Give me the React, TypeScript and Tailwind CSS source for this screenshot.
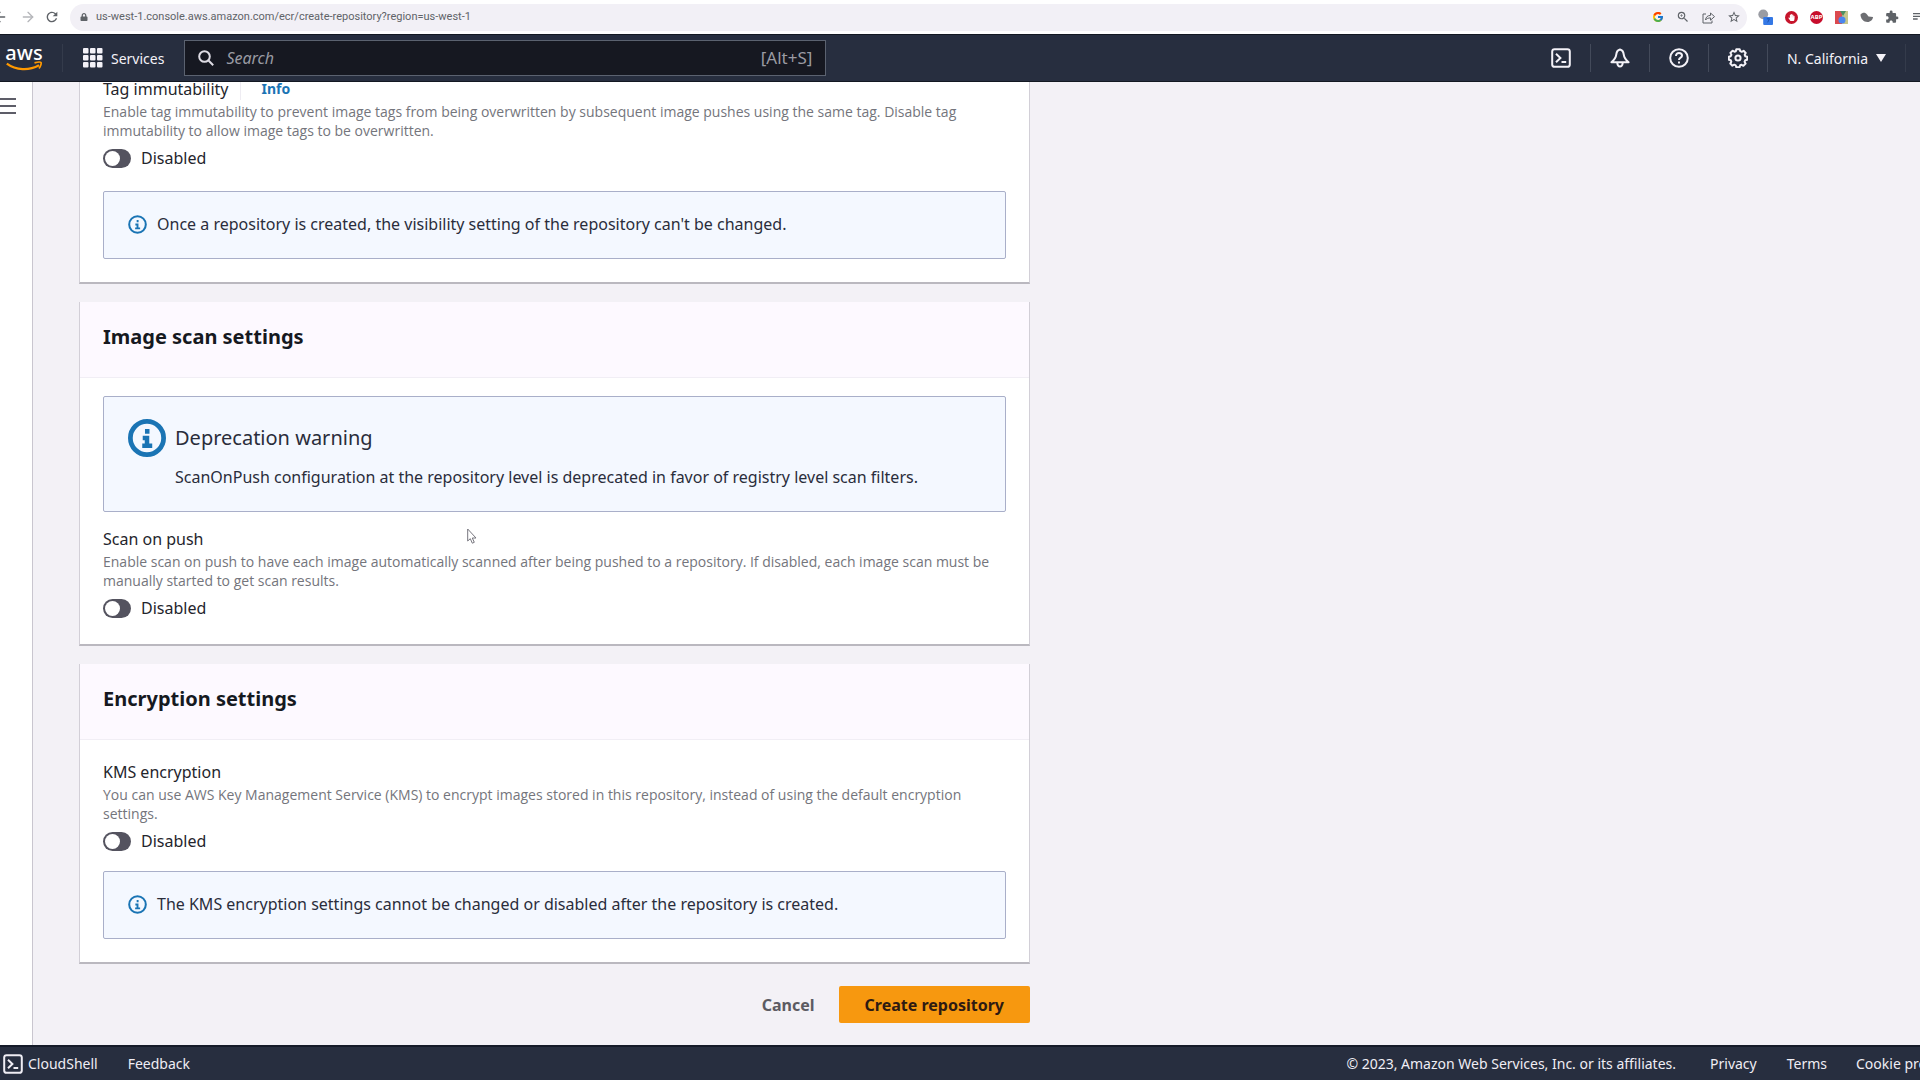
import React, { useState } from "react";
import { FaHandPaper, FaLock } from "react-icons/fa";
import { FcGoogle } from "react-icons/fc";
import { MdExtension, MdOutlineZoomIn, MdPlaylistPlay, MdRefresh, MdStarBorder } from "react-icons/md";
import { ArrowLeft, ArrowRight } from "lucide-react";

const InfoIcon: React.FC<{ large?: boolean }> = ({ large }) => (
  <svg viewBox="0 0 16 16" className={large ? "h-[38px] w-[38px] shrink-0" : "h-[19px] w-[19px] shrink-0"} fill="none" stroke="#1a74b4">
    <circle cx="8" cy="8" r="7" strokeWidth={large ? 2 : 1.7} />
    <path d="M8 11V8H6.2M6 11.3h4.2M8.1 4.2v2" strokeWidth={large ? 1.9 : 1.6} />
  </svg>
);

const ShellIcon = () => (
  <svg viewBox="0 0 20 20" className="h-5 w-5" fill="none" stroke="currentColor" strokeWidth="2">
    <rect x="1.2" y="1.2" width="17.6" height="17.6" rx="2.4" />
    <path d="M5 5.8l4.4 4.2L5 14.2M10.5 14h4.7" />
  </svg>
);

const BellIcon = () => (
  <svg viewBox="0 0 20 20" className="h-5 w-5" fill="none" stroke="currentColor" strokeWidth="2" strokeLinejoin="round">
    <path d="M10 1.5C7.8 2 6.6 3.8 6.3 6.300 5.900 9.500 4.300 11.800 1.400 14.200h17.200c-2.900-2.400-4.500-4.700-4.900-7.900C13.400 3.800 12.200 2 10 1.500z" />
    <path d="M7.300 15c.2 2.200 1.200 3.500 2.700 3.500s2.500-1.300 2.700-3.500" />
  </svg>
);

const HelpIcon = () => (
  <svg viewBox="0 0 20 20" className="h-5 w-5" fill="none" stroke="currentColor" strokeWidth="2">
    <circle cx="10" cy="10" r="8.800" />
    <path d="M7 8c0-1.900 1.300-2.900 3-2.900s3 1 3 2.600c0 2-3 2-3 4.300M10 13.500v2" />
  </svg>
);

const GearIcon = () => (
  <svg viewBox="0 0 20 20" className="h-5 w-5" fill="none" stroke="currentColor" strokeWidth="2" strokeLinejoin="round">
    <path d="M8.300 1.200h3.400l.6 2 1.400.6 1.900-1 2.100 2.200-1 1.800.5 1.400 2 .6v2.900l-2 .6-.6 1.400 1 1.900-2.200 2.200-1.800-1-1.400.5-.6 2H8.300l-.6-2-1.400-.6-1.900 1-2.100-2.200 1-1.800-.5-1.400-2-.6V8.800l2-.6.6-1.400-1-1.900 2.200-2.200 1.800 1 1.400-.5z" />
    <circle cx="10" cy="10" r="2.600" />
  </svg>
);

const ShareIcon = () => (
  <svg viewBox="0 0 13 13" className="h-[13px] w-[13px]" fill="none" stroke="currentColor">
    <path d="M4 3H1v9h9V9.500" />
    <path d="M3.500 9c.4-3 2-4.500 5-4.600V2l4 3.600-4 3.600V6.900C6.300 6.900 4.700 7.500 3.500 9z" />
  </svg>
);

const AwsLogo = () => (
  <a href="#home" className="flex w-[36px] flex-col items-center text-white">
    <span className="text-xl leading-4 font-medium">aws</span>
    <svg viewBox="0 0 36 11" className="h-[11px] w-9" fill="none" stroke="#f90">
      <path d="M.8 2.600C10 9.500 23 10 33 4.300" strokeWidth="2.200" />
      <path d="M28.500 1.900c3-.8 6-1 6.500-.3s-.3 3.700-2 5.900" strokeWidth="1.700" />
    </svg>
  </a>
);

const BrowserBar = () => (
  <div className="flex h-[34px] shrink-0 items-center overflow-hidden bg-white text-[#5f6368]">
    <button type="button" aria-label="Back" className="-ml-2 w-4"><ArrowLeft size={16} /></button>
    <button type="button" aria-label="Forward" className="ml-3 w-4 text-[#b5b6ba]"><ArrowRight size={16} /></button>
    <button type="button" aria-label="Reload" className="ml-2 w-4"><MdRefresh size={16} /></button>
    <div className="ml-[10px] flex h-[27px] flex-1 items-center rounded-full bg-[#f2f0f6] pr-[6px] pl-[10px]">
      <FaLock size={8} />
      <input
        aria-label="Address"
        className="ml-2 min-w-0 flex-1 bg-transparent font-[Roboto] text-[11px] outline-none"
        defaultValue="us-west-1.console.aws.amazon.com/ecr/create-repository?region=us-west-1"
      />
      <div className="flex items-center gap-3">
        <FcGoogle size={12} />
        <MdOutlineZoomIn size={14} />
        <ShareIcon />
        <MdStarBorder size={14} />
      </div>
    </div>
    <div className="flex w-[173px] items-center gap-3 overflow-hidden pl-[10px]">
      <svg viewBox="0 0 18 18" className="h-[18px] w-4 shrink-0">
        <circle cx="7" cy="6" r="5.500" fill="#9a9ca3" />
        <rect x="7" y="9" width="11" height="9" rx="1" fill="#3478e5" />
        <path d="M11 11h3l-2 4" stroke="#1b4fa8" fill="none" />
      </svg>
      <span className="flex h-[13px] w-[13px] shrink-0 items-center justify-center rounded-full bg-[#c6142b] text-white"><FaHandPaper size={7} /></span>
      <span className="flex h-[13px] w-[13px] shrink-0 items-center justify-center rounded-full bg-[#c70d2c] text-[6px] font-bold text-white">ABP</span>
      <svg viewBox="0 0 13 13" className="h-[13px] w-[13px] shrink-0">
        <path d="M0 0h7v13H0z" fill="#db4a4f" />
        <path d="M7 0h6v13H7z" fill="#c5c68b" />
        <path d="M5 0l3 5 3-5z" fill="#4e8f63" />
        <circle cx="7" cy="9" r="3.500" fill="#4a86ee" />
      </svg>
      <svg viewBox="0 0 13 13" className="h-[13px] w-[13px] shrink-0" fill="#6d6e72">
        <path d="M.5 3.500c2-2.500 5-2.500 6.500 0l1.500 2 4.500.5c0 2.500-2.500 5-5.500 5-4 0-7-3.500-7-7.500z" />
      </svg>
      <MdExtension size={14} className="shrink-0" />
      <MdPlaylistPlay size={16} className="shrink-0" />
    </div>
  </div>
);

const navCell = "flex h-7 w-[59px] items-center justify-center border-r border-[#434a5a]";

const TopNav = () => (
  <header className="flex h-12 shrink-0 items-center border-y border-[#131822] bg-[#272e3f] pl-[6px] text-[#f4f2f8]">
    <AwsLogo />
    <div className="ml-5 h-7 border-l border-[#343b4b]" />
    <button type="button" className="ml-5 flex items-center gap-2 text-[14px]">
      <svg viewBox="0 0 20 20" className="h-5 w-5" fill="currentColor">
        {[0, 7, 14].map(y => [0, 7, 14].map(x => <rect key={`${x}-${y}`} x={x} y={y} width="5.500" height="5.500" rx="1" />))}
      </svg>
      Services
    </button>
    <label className="ml-5 flex h-9 w-[642px] items-center border border-[#5b6270] bg-[#161821] px-[13px]">
      <svg viewBox="0 0 16 16" className="h-4 w-4" fill="none" stroke="#dedce4" strokeWidth="2">
        <circle cx="6.500" cy="6.500" r="5.300" />
        <path d="M10.500 10.500L15.200 15.200" />
      </svg>
      <input aria-label="Search" placeholder="Search" className="ml-3 min-w-0 flex-1 bg-transparent text-base italic outline-none placeholder:text-[#9a9ba3]" />
      <span className="text-[17px] text-[#9a9ba3]">[Alt+S]</span>
    </label>
    <nav className="mr-[14px] ml-auto flex items-center">
      <button type="button" aria-label="CloudShell" className={navCell}><ShellIcon /></button>
      <button type="button" aria-label="Notifications" className={navCell}><BellIcon /></button>
      <button type="button" aria-label="Help" className={navCell}><HelpIcon /></button>
      <button type="button" aria-label="Settings" className={navCell}><GearIcon /></button>
      <button type="button" className="flex h-7 w-[138px] items-center justify-center gap-2 border-r border-[#343b4b] text-[14px]">
        N. California
        <svg viewBox="0 0 10 8" className="h-2 w-[10px]" fill="currentColor"><path d="M0 0h10L5 8z" /></svg>
      </button>
    </nav>
  </header>
);

const ToggleField: React.FC<{ id: string; label: string; description: string; info?: boolean }> = ({ id, label, description, info }) => {
  const [enabled, setEnabled] = useState(false);
  return (
    <div>
      <div className="flex items-center leading-[22px]">
        <span id={`${id}-label`}>{label}</span>
        {info && <a href="#info" className="ml-3 border-l border-[#eeecf2] pl-5 text-[14px] font-bold text-[#1a74b4]">Info</a>}
      </div>
      <p className="mt-[2px] font-['Open_Sans'] text-[14px] leading-[19px] text-[#74757c]">{description}</p>
      <label className="mt-[7px] flex w-fit items-center gap-[10px] leading-[22px]">
        <input
          type="checkbox"
          role="switch"
          aria-describedby={`${id}-label`}
          checked={enabled}
          onChange={e => setEnabled(e.target.checked)}
          className="flex h-[19px] w-7 appearance-none items-center rounded-full bg-[#54535f] px-[2px] before:h-[15px] before:w-[15px] before:rounded-full before:bg-white checked:justify-end checked:bg-[#0073bb]"
        />
        {enabled ? "Enabled" : "Disabled"}
      </label>
    </div>
  );
};

const Alert: React.FC<{ title?: string; children: React.ReactNode }> = ({ title, children }) => (
  <div className={`flex rounded-xs border border-[#a9afc9] bg-[#f4f8ff] px-6 text-[#2a2d3b] ${title ? "h-[116px] gap-[9px] py-[22px]" : "h-[68px] items-center gap-[10px] pb-[2px]"}`}>
    <InfoIcon large={!!title} />
    <div>
      {title && <h3 className="mb-[9px] text-xl leading-[38px]">{title}</h3>}
      <p className="leading-[22px]">{children}</p>
    </div>
  </div>
);

const Card: React.FC<{ title?: string; children: React.ReactNode }> = ({ title, children }) => (
  <section className="border-x border-b-2 border-x-[#d2cfd7] border-b-[#bab8bf] bg-white">
    {title && (
      <div className="flex h-[76px] items-center border-b border-[#f1eef5] bg-[#fdf9ff] px-[23px] pb-[6px]">
        <h2 className="text-xl font-bold text-[#16191f]">{title}</h2>
      </div>
    )}
    {children}
  </section>
);

const App: React.FC = () => {
  return (
    <div className="flex h-screen flex-col overflow-hidden font-['Noto_Sans',sans-serif] text-base text-[#24252c]">
      <BrowserBar />
      <TopNav />
      <div className="flex min-h-0 flex-1 bg-[#f3f1f6]">
        <aside className="w-[33px] shrink-0 border-r border-[#c9c6cf] bg-white pt-4">
          <button type="button" aria-label="Open navigation" className="block">
            <svg viewBox="0 0 16 16" className="h-4 w-4" stroke="#5d5d68" strokeWidth="2"><path d="M0 1h16M0 8h16M0 15h16" /></svg>
          </button>
        </aside>
        {/* the form is scrolled to its end */}
        <main className="flex min-w-0 flex-1 flex-col justify-end overflow-hidden pr-6 pb-[22px] pl-[46px]">
          <form className="flex w-full max-w-[951px] flex-col gap-[18px]" onSubmit={e => e.preventDefault()}>
            <Card>
              <div className="flex flex-col gap-[22px] px-[23px] pb-[23px]">
                <ToggleField
                  id="tag"
                  label="Tag immutability"
                  info
                  description="Enable tag immutability to prevent image tags from being overwritten by subsequent image pushes using the same tag. Disable tag immutability to allow image tags to be overwritten."
                />
                <Alert>Once a repository is created, the visibility setting of the repository can't be changed.</Alert>
              </div>
            </Card>
            <Card title="Image scan settings">
              <div className="flex flex-col gap-4 px-[23px] pt-[18px] pb-[25px]">
                <Alert title="Deprecation warning">ScanOnPush configuration at the repository level is deprecated in favor of registry level scan filters.</Alert>
                <ToggleField
                  id="scan"
                  label="Scan on push"
                  description="Enable scan on push to have each image automatically scanned after being pushed to a repository. If disabled, each image scan must be manually started to get scan results."
                />
              </div>
            </Card>
            <Card title="Encryption settings">
              <div className="flex flex-col gap-[19px] px-[23px] pt-[21px] pb-[23px]">
                <ToggleField
                  id="kms"
                  label="KMS encryption"
                  description="You can use AWS Key Management Service (KMS) to encrypt images stored in this repository, instead of using the default encryption settings."
                />
                <Alert>The KMS encryption settings cannot be changed or disabled after the repository is created.</Alert>
              </div>
            </Card>
            <div className="flex items-center justify-end gap-6 pt-1 font-bold">
              <button type="button" className="text-[#5c5b62]">Cancel</button>
              <button type="submit" className="h-[37px] rounded-xs bg-[#f7980f] px-[26px] text-[#2e1a12]">Create repository</button>
            </div>
          </form>
        </main>
      </div>
      <footer className="flex h-[35px] shrink-0 items-center overflow-hidden border-t-2 border-[#151b29] bg-[#272e3f] pl-[3px] text-[14px] whitespace-nowrap text-[#efedf4]">
        <a href="#shell" className="flex items-center gap-[5px]"><ShellIcon />CloudShell</a>
        <a href="#feedback" className="ml-[30px]">Feedback</a>
        <span className="ml-auto">© 2023, Amazon Web Services, Inc. or its affiliates.</span>
        <a href="#privacy" className="ml-[34px]">Privacy</a>
        <a href="#terms" className="ml-[30px]">Terms</a>
        <a href="#cookies" className="ml-[29px] w-16 overflow-hidden">Cookie preferences</a>
      </footer>
      <svg viewBox="0 0 10 16" className="pointer-events-none absolute top-[528px] left-[467px] h-4 w-[10px]" fill="#fff" stroke="#77767e">
        <path d="M.7 1v12l2.600-2.300 2 4.500 2-.9-2-4.300h3.700z" />
      </svg>
    </div>
  );
};

export default App;
